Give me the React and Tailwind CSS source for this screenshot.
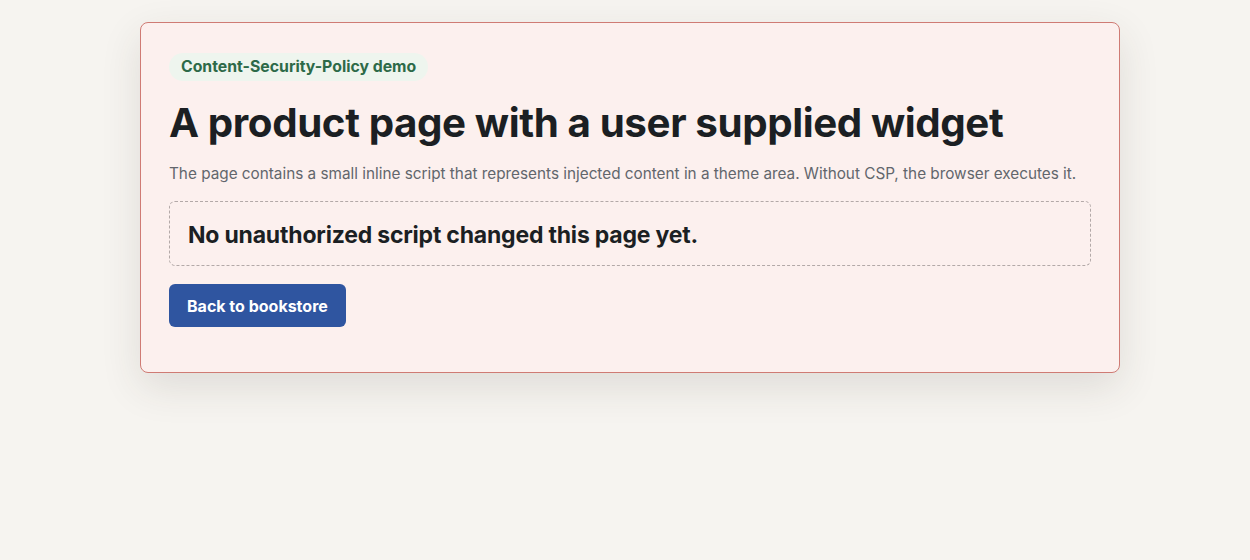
import React from 'react';

const App = () => {
  return (
    <div className="min-h-screen bg-[#f6f4f0] pt-[22px] pl-[10px] font-['Inter',sans-serif]">
      <div className="mx-auto w-[980px] rounded-[8px] border border-[#cf7b74] bg-[#fcf0ee] px-[28px] pt-[30px] pb-[45px] shadow-[0_14px_40px_rgba(60,50,40,0.12)]">
        <span className="inline-block rounded-full bg-[#eef5ee] px-[12px] py-[4px] text-[15.8px] font-bold text-[#2d6a48] leading-[20px]">
          Content-Security-Policy demo
        </span>
        <h1 className="mt-[17px] text-[40.3px] font-bold leading-[50px] tracking-[-0.4px] text-[#1b1f23]">
          A product page with a user supplied widget
        </h1>
        <p className="mt-[14px] text-[15.3px] leading-[24px] text-[#62666c]">
          The page contains a small inline script that represents injected content in a theme area. Without CSP, the browser executes it.
        </p>
        <div className="mt-[15px] rounded-[6px] border border-dashed border-[#b3a9a8] px-[18px] pt-[18px] pb-[14px]">
          <h2 className="text-[23px] font-bold leading-[31px] tracking-[-0.2px] text-[#1b1f23]">
            No unauthorized script changed this page yet.
          </h2>
        </div>
        <button className="mt-[18px] h-[43px] rounded-[6px] bg-[#2f55a0] px-[18px] text-[16px] font-bold text-white">
          Back to bookstore
        </button>
      </div>
    </div>
  );
};

export default App;
